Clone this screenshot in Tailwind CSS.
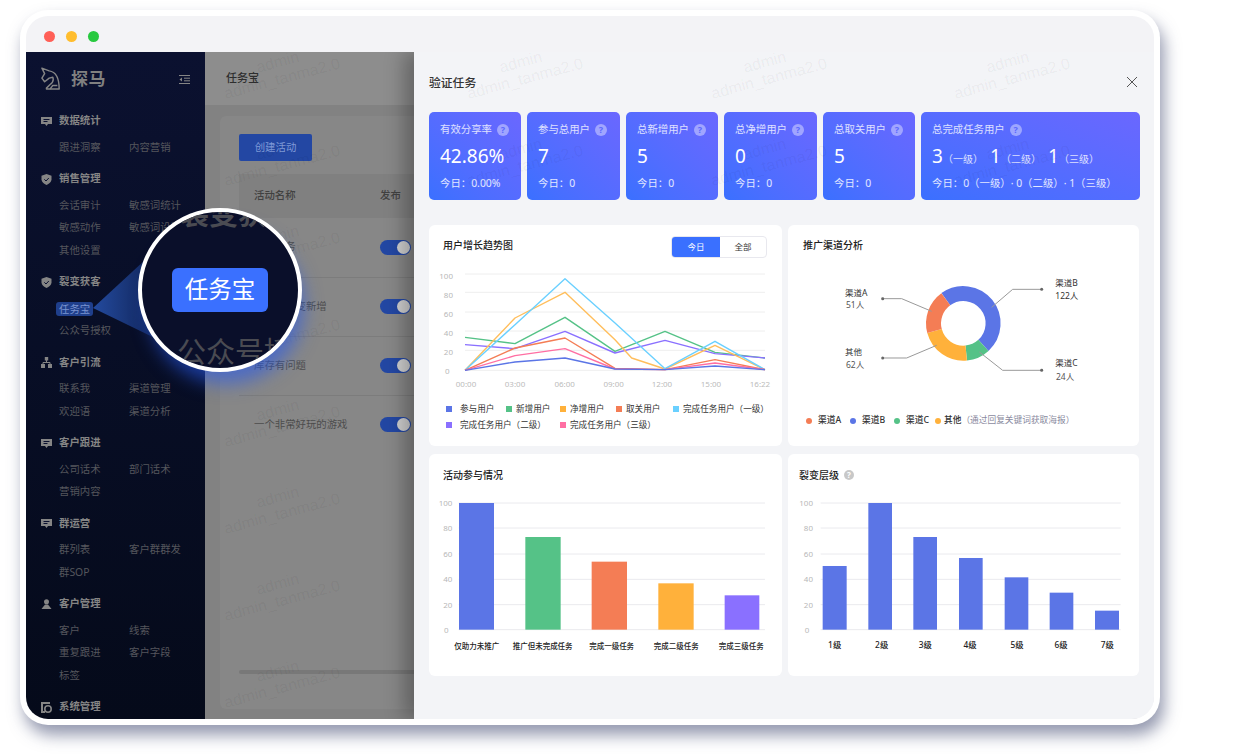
<!DOCTYPE html>
<html lang="zh-CN">
<head>
  <meta charset="UTF-8">
  <title>探马 任务宝</title>
  <script src="https://cdn.jsdelivr.net/npm/@tailwindcss/browser@4"></script>
</head>
<body class="bg-white w-[1250px] h-[754px] overflow-hidden [text-spacing-trim:space-all] font-['Noto_Sans','Noto_Sans_CJK_SC',sans-serif]">
  <div class="pt-[10px] pl-[20px]">
    <!-- Window -->
    <div class="relative w-[1140px] h-[715px] bg-white rounded-[28px] p-[6px] shadow-[4px_10px_16px_rgba(60,70,110,0.55)]">
      <div class="relative w-full h-full bg-[#f3f3f6] rounded-[22px] overflow-hidden flex flex-col">
        <div class="h-[36px] shrink-0 flex items-center gap-[11px] pl-[18px] pt-[4px]">
          <span class="w-[11px] h-[11px] rounded-full bg-[#ff5f57]"></span>
          <span class="w-[11px] h-[11px] rounded-full bg-[#ffbd2e]"></span>
          <span class="w-[11px] h-[11px] rounded-full bg-[#28c940]"></span>
        </div>

        <div class="relative flex-1 flex overflow-hidden">
          <!-- Sidebar -->
          <aside class="w-[179px] shrink-0 bg-gradient-to-b from-[#0b1130] to-[#050a1a] text-[10.4px] overflow-hidden">
            <div class="h-[61px] pb-[7px] pl-[15px] pr-[15px] flex items-center">
              <svg class="w-[20px] h-[25px]" viewBox="-1 -1 22 27" fill="none" stroke="#858585" stroke-width="1.600" stroke-linejoin="round"><path d="M0 0L8 3C15 4 19 10 19 23H5V22L9 18C12 16 13 13 12 10L8 11 3 15 0 11 3 6z"/><path d="M9 23L12 19H17"/></svg>
              <span class="ml-[10px] text-[17px] font-bold text-[#808080] tracking-[0.5px]">探马</span>
              <svg class="ml-auto w-[11px] h-[11px]" viewBox="0 0 11 11" stroke="#858585" stroke-width="1" fill="#858585"><path d="M0 1.500h11M5 4.200h6M5 6.800h6M0 9.500h11"/><path d="M3 3.500L0.500 5.500 3 7.500z" stroke="none"/></svg>
            </div>
            <div class="pl-[15px]">
              <div class="flex items-center h-[16px] mb-[7.25px] font-bold text-[#858585]">
                <svg class="w-[11px] h-[11px] mr-[7px]" viewBox="0 0 11 11" fill="#858585"><path d="M0 1h11v7H7L5.500 10 4 8H0z"/><path d="M2.500 3.500h6M2.500 5.500h4" stroke="#0b1130"/></svg>数据统计
              </div>
              <div class="grid grid-cols-[70px_70px] auto-rows-[22.5px] items-center pl-[18px] mb-[12.25px] text-[#55565c]"><span>跟进洞察</span><span>内容营销</span></div>

              <div class="flex items-center h-[16px] mb-[7.25px] font-bold text-[#858585]">
                <svg class="w-[11px] h-[11px] mr-[7px]" viewBox="0 0 11 11" fill="#858585"><path d="M5.500 0L10.500 1.800V5.500C10.500 8 8 10 5.500 11 3 10 .5 8 .5 5.500V1.800z"/><path d="M3.300 5.300l1.700 1.700 2.800-3" stroke="#0b1130" fill="none"/></svg>销售管理
              </div>
              <div class="grid grid-cols-[70px_70px] auto-rows-[22.5px] items-center pl-[18px] mb-[12.25px] text-[#55565c]"><span>会话审计</span><span class="whitespace-nowrap">敏感词统计</span><span>敏感动作</span><span class="whitespace-nowrap">敏感词设置</span><span>其他设置</span></div>

              <div class="flex items-center h-[16px] mb-[7.25px] font-bold text-[#858585]">
                <svg class="w-[11px] h-[11px] mr-[7px]" viewBox="0 0 11 11" fill="#858585"><path d="M5.500 0L10.500 1.800V5.500C10.500 8 8 10 5.500 11 3 10 .5 8 .5 5.500V1.800z"/><path d="M3.300 5.300l1.700 1.700 2.800-3" stroke="#0b1130" fill="none"/></svg>裂变获客
              </div>
              <div class="grid grid-cols-[70px_70px] auto-rows-[22.5px] items-center pl-[18px] mb-[12.25px] text-[#55565c]"><span class="justify-self-start -ml-[3px] px-[3px] rounded-[3px] bg-[#1f3f8c] text-[#7b94d0] leading-[14px]">任务宝</span><span>任务宝</span><span class="whitespace-nowrap">公众号授权</span></div>

              <div class="flex items-center h-[16px] mb-[7.25px] font-bold text-[#858585]">
                <svg class="w-[11px] h-[11px] mr-[7px]" viewBox="0 0 11 11" fill="#858585"><path d="M3.800 0h3.400v3.400H3.800zM0 7h4v4H0zM7 7h4v4H7z"/><path d="M5.500 3v2.500M2 7V5.500h7V7" fill="none" stroke="#858585"/></svg>客户引流
              </div>
              <div class="grid grid-cols-[70px_70px] auto-rows-[22.5px] items-center pl-[18px] mb-[12.25px] text-[#55565c]"><span>联系我</span><span>渠道管理</span><span>欢迎语</span><span>渠道分析</span></div>

              <div class="flex items-center h-[16px] mb-[7.25px] font-bold text-[#858585]">
                <svg class="w-[11px] h-[11px] mr-[7px]" viewBox="0 0 11 11" fill="#858585"><path d="M0 1h11v7H7L5.500 10 4 8H0z"/><path d="M2.500 3.500h6M2.500 5.500h4" stroke="#0b1130"/></svg>客户跟进
              </div>
              <div class="grid grid-cols-[70px_70px] auto-rows-[22.5px] items-center pl-[18px] mb-[12.25px] text-[#55565c]"><span>公司话术</span><span>部门话术</span><span>营销内容</span></div>

              <div class="flex items-center h-[16px] mb-[7.25px] font-bold text-[#858585]">
                <svg class="w-[11px] h-[11px] mr-[7px]" viewBox="0 0 11 11" fill="#858585"><path d="M0 1h11v7H7L5.500 10 4 8H0z"/><path d="M2.500 3.500h6M2.500 5.500h4" stroke="#0b1130"/></svg>群运营
              </div>
              <div class="grid grid-cols-[70px_70px] auto-rows-[22.5px] items-center pl-[18px] mb-[12.25px] text-[#55565c]"><span>群列表</span><span class="whitespace-nowrap">客户群群发</span><span>群SOP</span></div>

              <div class="flex items-center h-[16px] mb-[7.25px] font-bold text-[#858585]">
                <svg class="w-[11px] h-[11px] mr-[7px]" viewBox="0 0 11 11" fill="#858585"><circle cx="5.500" cy="2.800" r="2.500"/><path d="M4 5.500h3l3.500 4.500H.5z"/></svg>客户管理
              </div>
              <div class="grid grid-cols-[70px_70px] auto-rows-[22.5px] items-center pl-[18px] mb-[12.25px] text-[#55565c]"><span>客户</span><span>线索</span><span>重复跟进</span><span>客户字段</span><span>标签</span></div>

              <div class="flex items-center h-[16px] font-bold text-[#858585]">
                <svg class="w-[11px] h-[11px] mr-[7px]" viewBox="0 0 11 11" fill="#858585"><path d="M0 0h9v2H2v7h2v2H0z"/><circle cx="7" cy="7" r="3.200" fill="none" stroke="#858585" stroke-width="1.600"/></svg>系统管理
              </div>
            </div>
          </aside>

          <!-- Main, dimmed by the drawer -->
          <main class="w-[209px] shrink-0 bg-[#828282] overflow-hidden text-[10.4px]">
            <div class="h-[53px] bg-[#8d8d8d] pl-[21px] flex items-center text-[11px] font-medium text-[#2e2e2e]">任务宝</div>
            <div class="mt-[11px] ml-[15px] w-[400px] h-[593px] bg-[#878787] rounded-[6px] pl-[19px] pt-[18px] flex flex-col">
              <div class="w-[73px] h-[27px] rounded-[2px] bg-[#2347a3] text-[#7f9ad8] flex items-center justify-center">创建活动</div>
              <div class="mt-[13px] h-[44px] bg-[#808080] flex items-center pl-[15px] font-medium text-[#414141]">
                <span class="w-[126px]">活动名称</span><span>发布</span>
              </div>
              <div class="h-[59.5px] border-b border-[#7c7c7c] flex items-center pl-[15px] text-[#4d4d4d]">
                <span class="w-[126px]">验证任务</span>
                <span class="w-[31px] h-[15px] rounded-full bg-[#2347a3] flex items-center justify-end pr-[1px]"><span class="w-[13px] h-[13px] rounded-full bg-[#cfcfcf]"></span></span>
              </div>
              <div class="h-[59px] border-b border-[#7c7c7c] flex items-center pl-[15px] text-[#4d4d4d]">
                <span class="w-[126px]">老带新裂变新增</span>
                <span class="w-[31px] h-[15px] rounded-full bg-[#2347a3] flex items-center justify-end pr-[1px]"><span class="w-[13px] h-[13px] rounded-full bg-[#cfcfcf]"></span></span>
              </div>
              <div class="h-[59px] border-b border-[#7c7c7c] flex items-center pl-[15px] text-[#4d4d4d]">
                <span class="w-[126px]">库存有问题</span>
                <span class="w-[31px] h-[15px] rounded-full bg-[#2347a3] flex items-center justify-end pr-[1px]"><span class="w-[13px] h-[13px] rounded-full bg-[#cfcfcf]"></span></span>
              </div>
              <div class="h-[58px] flex items-center pl-[15px] text-[#4d4d4d]">
                <span class="w-[126px]">一个非常好玩的游戏</span>
                <span class="w-[31px] h-[15px] rounded-full bg-[#2347a3] flex items-center justify-end pr-[1px]"><span class="w-[13px] h-[13px] rounded-full bg-[#cfcfcf]"></span></span>
              </div>
              <div class="mt-auto mb-[35px] h-[4px] bg-[#787878] rounded-full"></div>
            </div>
          </main>

          <!-- Drawer -->
          <section class="relative w-[740px] shrink-0 bg-[#f3f4f7] pl-[15px] pr-[14px] shadow-[-10px_0_18px_rgba(0,0,0,0.28)]">
            <div class="h-[60px] flex items-center justify-between">
              <h2 class="text-[11.8px] font-medium text-[#333] pt-[2px]">验证任务</h2>
              <svg class="w-[10px] h-[10px] mr-[3px]" viewBox="0 0 10 10" stroke="#555" stroke-width="1" fill="none"><path d="M0 0l10 10M10 0L0 10"/></svg>
            </div>

            <!-- Stat cards -->
            <div class="flex gap-[6px] text-white">
              <div class="w-[92px] h-[88px] rounded-[5px] bg-gradient-to-tr from-[#3a70ff] to-[#6a67ff] pl-[11px] pt-[10px]">
                <div class="flex items-center h-[16px] text-[10.4px] text-white/80">有效分享率<span class="ml-[5px] w-[12px] h-[12px] rounded-full bg-white/40 text-[#5a68ff] text-[9px] font-bold flex items-center justify-center">?</span></div>
                <div class="mt-[4px] h-[28px] leading-[28px] text-[19px]">42.86%</div>
                <div class="mt-[5px] text-[10.4px] leading-[16px] text-white/85">今日：0.00%</div>
              </div>
              <div class="w-[93px] h-[88px] rounded-[5px] bg-gradient-to-tr from-[#3a70ff] to-[#6a67ff] pl-[11px] pt-[10px]">
                <div class="flex items-center h-[16px] text-[10.4px] text-white/80">参与总用户<span class="ml-[5px] w-[12px] h-[12px] rounded-full bg-white/40 text-[#5a68ff] text-[9px] font-bold flex items-center justify-center">?</span></div>
                <div class="mt-[4px] h-[28px] leading-[28px] text-[19px]">7</div>
                <div class="mt-[5px] text-[10.4px] leading-[16px] text-white/85">今日：0</div>
              </div>
              <div class="w-[92px] h-[88px] rounded-[5px] bg-gradient-to-tr from-[#3a70ff] to-[#6a67ff] pl-[11px] pt-[10px]">
                <div class="flex items-center h-[16px] text-[10.4px] text-white/80">总新增用户<span class="ml-[5px] w-[12px] h-[12px] rounded-full bg-white/40 text-[#5a68ff] text-[9px] font-bold flex items-center justify-center">?</span></div>
                <div class="mt-[4px] h-[28px] leading-[28px] text-[19px]">5</div>
                <div class="mt-[5px] text-[10.4px] leading-[16px] text-white/85">今日：0</div>
              </div>
              <div class="w-[93px] h-[88px] rounded-[5px] bg-gradient-to-tr from-[#3a70ff] to-[#6a67ff] pl-[11px] pt-[10px]">
                <div class="flex items-center h-[16px] text-[10.4px] text-white/80">总净增用户<span class="ml-[5px] w-[12px] h-[12px] rounded-full bg-white/40 text-[#5a68ff] text-[9px] font-bold flex items-center justify-center">?</span></div>
                <div class="mt-[4px] h-[28px] leading-[28px] text-[19px]">0</div>
                <div class="mt-[5px] text-[10.4px] leading-[16px] text-white/85">今日：0</div>
              </div>
              <div class="w-[92px] h-[88px] rounded-[5px] bg-gradient-to-tr from-[#3a70ff] to-[#6a67ff] pl-[11px] pt-[10px]">
                <div class="flex items-center h-[16px] text-[10.4px] text-white/80">总取关用户<span class="ml-[5px] w-[12px] h-[12px] rounded-full bg-white/40 text-[#5a68ff] text-[9px] font-bold flex items-center justify-center">?</span></div>
                <div class="mt-[4px] h-[28px] leading-[28px] text-[19px]">5</div>
                <div class="mt-[5px] text-[10.4px] leading-[16px] text-white/85">今日：0</div>
              </div>
              <div class="w-[219px] h-[88px] rounded-[5px] bg-gradient-to-tr from-[#3a70ff] to-[#6a67ff] pl-[11px] pt-[10px]">
                <div class="flex items-center h-[16px] text-[10.4px] text-white/80">总完成任务用户<span class="ml-[5px] w-[12px] h-[12px] rounded-full bg-white/40 text-[#5a68ff] text-[9px] font-bold flex items-center justify-center">?</span></div>
                <div class="mt-[4px] h-[28px] leading-[28px] text-[19px] flex items-baseline">
                  <span class="w-[11px]">3</span><span class="text-[10px] text-white/80 w-[47px]">（一级）</span>
                  <span class="w-[11px]">1</span><span class="text-[10px] text-white/80 w-[47px]">（二级）</span>
                  <span class="w-[11px]">1</span><span class="text-[10px] text-white/80">（三级）</span>
                </div>
                <div class="mt-[5px] text-[10.4px] leading-[16px] text-white/85 whitespace-nowrap">今日：0（一级）· 0（二级）· 1（三级）</div>
              </div>
            </div>

            <!-- Charts -->
            <div class="relative z-10 mt-[25px] grid grid-cols-[353px_351px] grid-rows-[221px_222px] gap-x-[6px] gap-y-[8px]">
              <!-- Line chart -->
              <div class="bg-white rounded-[6px] pl-[8px] pt-[11px]">
                <div class="h-[22px] flex items-center justify-between pl-[6px] pr-[15px]">
                  <h3 class="text-[10px] font-medium text-[#222] -mt-[3px]">用户增长趋势图</h3>
                  <div class="flex w-[96px] h-[22px] text-[8.5px] rounded-[4px] border border-[#e8e8ee] overflow-hidden">
                    <span class="w-[48px] bg-[#3a70ff] text-white flex items-center justify-center">今日</span>
                    <span class="flex-1 text-[#333] flex items-center justify-center">全部</span>
                  </div>
                </div>
                <svg class="mt-[10.33px] block w-[340px] h-[123.33px]" viewBox="36 130 1020 370" fill="none" font-size="24">
                  <g stroke="#eeeeee" stroke-width="3"><path d="M120 148H1020M120 203H1020M120 262H1020M120 319H1020M120 377H1020M120 437H1020"/></g>
                  <g fill="#b8b8b8" stroke="none" text-anchor="end"><text x="84" y="162">100</text><text x="84" y="219">80</text><text x="84" y="277">60</text><text x="84" y="335">40</text><text x="84" y="392">20</text><text x="74" y="449">0</text></g>
                  <g fill="#bbbbbb" stroke="none" text-anchor="middle"><text x="123" y="486">00:00</text><text x="270" y="486">03:00</text><text x="419" y="486">06:00</text><text x="566" y="486">09:00</text><text x="711" y="486">12:00</text><text x="858" y="486">15:00</text><text x="1005" y="486">16:22</text></g>
                  <g stroke-width="4.200" stroke-linejoin="round">
                    <polyline stroke="#55c287" points="120,338 270,357 420,278 570,380 720,320 870,383 1020,400"/>
                    <polyline stroke="#8a70ff" points="120,360 270,372 420,320 570,385 720,347 870,387 1020,400"/>
                    <polyline stroke="#ffbe5c" points="120,437 270,280 420,203 570,345 620,400 720,433 870,362 1020,435"/>
                    <polyline stroke="#6ad0ff" points="120,437 270,300 420,162 570,295 720,432 870,350 1020,435"/>
                    <polyline stroke="#f47d55" points="120,437 270,370 420,340 570,431 720,435 870,405 1020,435"/>
                    <polyline stroke="#ff6fa3" points="120,437 270,393 420,372 570,433 720,435 870,415 1020,435"/>
                    <polyline stroke="#5b75e6" points="120,437 270,412 420,400 570,433 720,435 870,424 1020,435"/>
                  </g>
                </svg>
                <div class="mt-[9.33px] pl-[9px] text-[8.6px] leading-[16px] text-[#333] whitespace-nowrap">
                  <div class="flex">
                    <span class="w-[60px] flex items-center"><i class="w-[6px] h-[6px] mr-[8px] bg-[#5b75e6]"></i>参与用户</span>
                    <span class="w-[54px] flex items-center"><i class="w-[6px] h-[6px] mr-[4px] bg-[#55c287]"></i>新增用户</span>
                    <span class="w-[56px] flex items-center"><i class="w-[6px] h-[6px] mr-[4px] bg-[#ffb13b]"></i>净增用户</span>
                    <span class="w-[57px] flex items-center"><i class="w-[6px] h-[6px] mr-[4px] bg-[#f47d55]"></i>取关用户</span>
                    <span class="flex items-center"><i class="w-[6px] h-[6px] mr-[4px] bg-[#6ad0ff]"></i>完成任务用户（一级）</span>
                  </div>
                  <div class="flex">
                    <span class="w-[114px] flex items-center"><i class="w-[6px] h-[6px] mr-[8px] bg-[#8a70ff]"></i>完成任务用户（二级）</span>
                    <span class="flex items-center"><i class="w-[6px] h-[6px] mr-[4px] bg-[#ff6fa3]"></i>完成任务用户（三级）</span>
                  </div>
                </div>
              </div>

              <!-- Donut -->
              <div class="bg-white rounded-[6px] pt-[11px]">
                <h3 class="h-[22px] pl-[15px] pt-[1px] text-[10px] leading-[16px] font-medium text-[#222]">推广渠道分析</h3>
                <svg class="mt-[10.33px] ml-[47px] block w-[260px] h-[116.67px]" viewBox="150 130 780 350" fill="none" font-size="25.500">
                  <g stroke-width="45">
                    <path stroke="#5b75e6" d="M482.400 223.600A89.500 89.500 0 0 1 595.300 362.100"/>
                    <path stroke="#55c287" d="M595.300 362.100A89.500 89.500 0 0 1 543.700 385.100"/>
                    <path stroke="#ffb13b" d="M543.700 385.100A89.500 89.500 0 0 1 448.600 319.200"/>
                    <path stroke="#f47d55" d="M448.600 319.200A89.500 89.500 0 0 1 482.400 223.600"/>
                  </g>
                  <g stroke="#999999" stroke-width="3">
                    <path d="M293 222H350L440 260"/><path d="M770 194H683L620 248"/><path d="M770 437H653L583 382"/><path d="M293 400H365L455 362"/>
                  </g>
                  <g fill="#666666"><circle cx="293" cy="222" r="4.500"/><circle cx="770" cy="194" r="4.500"/><circle cx="770" cy="437" r="4.500"/><circle cx="293" cy="400" r="4.500"/></g>
                  <g fill="#333333" stroke="none">
                    <text x="180" y="213">渠道A</text><text x="183" y="251" fill="#555555">51人</text>
                    <text x="811" y="184">渠道B</text><text x="811" y="223">122人</text>
                    <text x="180" y="390">其他</text><text x="183" y="429" fill="#555555">62人</text>
                    <text x="811" y="425">渠道C</text><text x="813" y="466" fill="#555555">24人</text>
                  </g>
                </svg>
                <div class="mt-[28px] pl-[18px] h-[16px] flex items-center text-[8.7px] font-medium text-[#333] whitespace-nowrap">
                  <span class="w-[44px] flex items-center"><i class="w-[6px] h-[6px] mr-[6px] rounded-full bg-[#f47d55]"></i>渠道A</span>
                  <span class="w-[44px] flex items-center"><i class="w-[6px] h-[6px] mr-[6px] rounded-full bg-[#5b75e6]"></i>渠道B</span>
                  <span class="w-[41px] flex items-center"><i class="w-[6px] h-[6px] mr-[6px] rounded-full bg-[#55c287]"></i>渠道C</span>
                  <span class="flex items-center"><i class="w-[6px] h-[6px] mr-[3px] rounded-full bg-[#ffb13b]"></i>其他<span class="font-normal text-[#8a8aa0]">（通过回复关键词获取海报）</span></span>
                </div>
              </div>

              <!-- Participation bars -->
              <div class="bg-white rounded-[6px] pl-[6px] pt-[13px]">
                <h3 class="h-[16px] pl-[8px] text-[10px] leading-[16px] font-medium text-[#222]">活动参与情况</h3>
                <svg class="mt-[15.33px] block w-[336.67px] h-[153.33px]" viewBox="30 130 1010 460" fill="none" font-size="24">
                  <g stroke="#eaeaee" stroke-width="3"><path d="M101 145H1020M101 220H1020M101 298H1020M101 374H1020M101 450H1020M101 525H1020"/></g>
                  <g fill="#b8b8b8" stroke="none" text-anchor="end"><text x="82" y="153">100</text><text x="82" y="229">80</text><text x="82" y="307">60</text><text x="82" y="382">40</text><text x="82" y="459">20</text><text x="71" y="534">0</text></g>
                  <g>
                    <rect x="102" y="145" width="105" height="380" fill="#5b75e6"/>
                    <rect x="301" y="247" width="106" height="278" fill="#55c287"/>
                    <rect x="500" y="321" width="106" height="204" fill="#f47d55"/>
                    <rect x="700" y="386" width="106" height="139" fill="#ffb13b"/>
                    <rect x="899" y="422" width="104" height="103" fill="#8a70ff"/>
                  </g>
                  <g fill="#222222" stroke="none" font-size="22.500" font-weight="500" text-anchor="middle"><text x="155" y="582">仅助力未推广</text><text x="353" y="582">推广但未完成任务</text><text x="560" y="582">完成一级任务</text><text x="754" y="582">完成二级任务</text><text x="949" y="582">完成三级任务</text></g>
                </svg>
              </div>

              <!-- Fission level bars -->
              <div class="bg-white rounded-[6px] pl-[7px] pt-[13px]">
                <h3 class="h-[16px] pl-[4px] flex items-center text-[10px] font-medium text-[#222]">裂变层级<span class="ml-[5px] w-[10px] h-[10px] rounded-full bg-[#c8c8c8] text-white text-[8px] font-bold flex items-center justify-center">?</span></h3>
                <svg class="mt-[15.33px] block w-[333.33px] h-[153.33px]" viewBox="30 130 1000 460" fill="none" font-size="24">
                  <g stroke="#eaeaee" stroke-width="3"><path d="M107 145H1007M107 220H1007M107 298H1007M107 374H1007M107 450H1007M107 525H1007"/></g>
                  <g fill="#b8b8b8" stroke="none" text-anchor="end"><text x="84" y="153">100</text><text x="84" y="229">80</text><text x="84" y="307">60</text><text x="84" y="382">40</text><text x="84" y="459">20</text><text x="73" y="534">0</text></g>
                  <g fill="#5b75e6">
                    <rect x="113" y="334" width="72" height="191"/>
                    <rect x="250" y="145" width="71" height="380"/>
                    <rect x="385" y="247" width="71" height="278"/>
                    <rect x="522" y="310" width="71" height="215"/>
                    <rect x="659" y="368" width="71" height="157"/>
                    <rect x="794" y="414" width="71" height="111"/>
                    <rect x="930" y="468" width="72" height="57"/>
                  </g>
                  <g fill="#222222" stroke="none" font-size="25" font-weight="500" text-anchor="middle"><text x="149" y="581">1级</text><text x="290" y="581">2级</text><text x="421" y="581">3级</text><text x="555" y="581">4级</text><text x="696" y="581">5级</text><text x="828" y="581">6级</text><text x="967" y="581">7级</text></g>
                </svg>
              </div>
            </div>
          </section>

          <!-- Watermark -->
          <div class="absolute left-[132px] -top-[26px] grid grid-cols-[repeat(4,243.33px)] auto-rows-[87px] pointer-events-none text-black/[0.055] text-[16px] leading-[17px] font-['Liberation_Sans',sans-serif]">
            <div class="-rotate-[15deg] flex flex-col items-center justify-center"><span>admin</span><span>admin_tanma2.0</span></div><div class="-rotate-[15deg] flex flex-col items-center justify-center"><span>admin</span><span>admin_tanma2.0</span></div><div class="-rotate-[15deg] flex flex-col items-center justify-center"><span>admin</span><span>admin_tanma2.0</span></div><div class="-rotate-[15deg] flex flex-col items-center justify-center"><span>admin</span><span>admin_tanma2.0</span></div>
            <div class="-rotate-[15deg] flex flex-col items-center justify-center"><span>admin</span><span>admin_tanma2.0</span></div><div class="-rotate-[15deg] flex flex-col items-center justify-center"><span>admin</span><span>admin_tanma2.0</span></div><div class="-rotate-[15deg] flex flex-col items-center justify-center"><span>admin</span><span>admin_tanma2.0</span></div><div class="-rotate-[15deg] flex flex-col items-center justify-center"><span>admin</span><span>admin_tanma2.0</span></div>
            <div class="-rotate-[15deg] flex flex-col items-center justify-center"><span>admin</span><span>admin_tanma2.0</span></div><div></div><div></div><div></div>
            <div class="-rotate-[15deg] flex flex-col items-center justify-center"><span>admin</span><span>admin_tanma2.0</span></div><div></div><div></div><div></div>
            <div class="-rotate-[15deg] flex flex-col items-center justify-center"><span>admin</span><span>admin_tanma2.0</span></div><div></div><div></div><div></div>
            <div class="-rotate-[15deg] flex flex-col items-center justify-center"><span>admin</span><span>admin_tanma2.0</span></div><div></div><div></div><div></div>
            <div class="-rotate-[15deg] flex flex-col items-center justify-center"><span>admin</span><span>admin_tanma2.0</span></div><div></div><div></div><div></div>
            <div class="-rotate-[15deg] flex flex-col items-center justify-center"><span>admin</span><span>admin_tanma2.0</span></div><div></div><div></div><div></div>
          </div>
        </div>
      </div>

      <!-- Callout wedge from the menu item to the magnifier -->
      <svg class="absolute left-[69px] top-[243px] w-[80px] h-[90px]" viewBox="0 0 80 90">
        <defs><linearGradient id="wedge" x1="0" y1="0" x2="1" y2="0"><stop offset="0" stop-color="#234a9e"/><stop offset="1" stop-color="#0f2050"/></linearGradient></defs>
        <path d="M4 55L56 7L72 88z" fill="url(#wedge)"/>
      </svg>

      <!-- Magnifier -->
      <div class="absolute left-[118px] top-[198px] w-[164px] h-[164px] rounded-full border-[4px] border-white bg-[#0a0f2a] shadow-[6px_16px_18px_-4px_rgba(40,90,235,0.6)]">
        <div class="relative w-full h-full rounded-full overflow-hidden">
          <span class="absolute left-[38px] -top-[20px] text-[29px] font-bold text-[#4a4b52] whitespace-nowrap">裂变获客</span>
          <span class="absolute left-[30px] top-[56px] w-[96px] h-[44px] rounded-[6px] bg-[#3a70ff] text-white text-[23.5px] flex items-center justify-center">任务宝</span>
          <span class="absolute left-[35px] top-[118px] text-[29px] text-[#4a4b52] whitespace-nowrap">公众号授权</span>
        </div>
      </div>
    </div>
  </div>
</body>
</html>
